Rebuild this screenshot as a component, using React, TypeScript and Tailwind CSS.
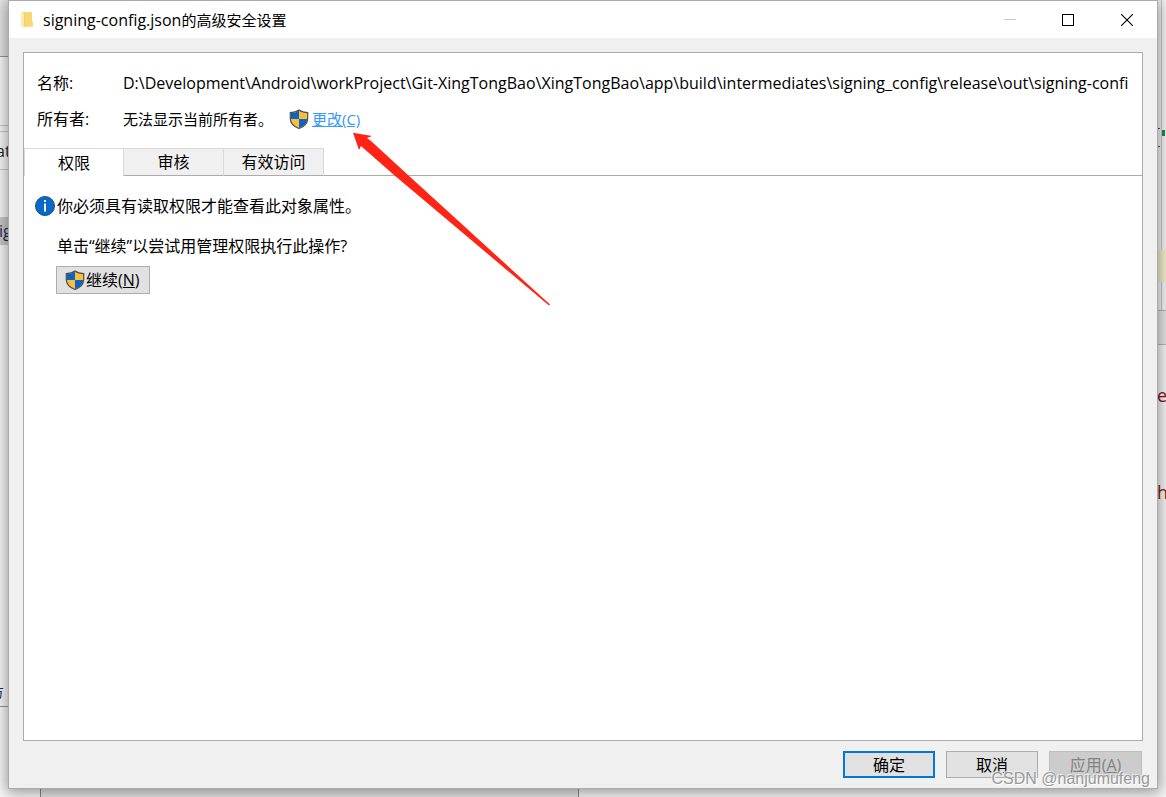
import type { ReactNode } from "react";

function Shield() {
  return (
    <svg viewBox="0 0 20 20" className="h-5 w-5 shrink-0" aria-hidden="true">
      <defs>
        <clipPath id="shield-clip">
          <path d="M10 1.5C7.700 3.200 4.800 4 1.800 4V9.500C1.800 14 5 17 10 19C15 17 18.200 14 18.200 9.500V4C15.200 4 12.300 3.200 10 1.500Z" />
        </clipPath>
      </defs>
      <g clipPath="url(#shield-clip)">
        <rect width="10" height="10" fill="#0865c4" />
        <rect x="10" width="10" height="10" fill="#ffbd38" />
        <rect y="10" width="10" height="10" fill="#ffbd38" />
        <rect x="10" y="10" width="10" height="10" fill="#0865c4" />
      </g>
      <path
        d="M10 1C7.700 2.800 4.800 3.600 1.300 3.600V9.500C1.300 14.200 4.800 17.500 10 19.500C15.200 17.500 18.700 14.200 18.700 9.500V3.600C15.200 3.600 12.300 2.800 10 1Z"
        fill="none"
        stroke="#4e4e4e"
        strokeWidth="1.2"
      />
    </svg>
  );
}

function FolderIcon() {
  return (
    <svg viewBox="0 0 14 18" className="h-[18px] w-3.5 shrink-0" aria-hidden="true">
      <path d="M2 1H11V11H12V16H3Z" fill="#f8d775" />
      <path d="M11 10H12V16H5V15H11Z" fill="#ffe08a" />
      <path d="M0 1H2L3.500 3V17.500L0 15Z" fill="#ffebac" />
      <path d="M2 1L3.500 3V15" fill="none" stroke="#e9c462" strokeWidth=".6" />
    </svg>
  );
}

function InfoIcon() {
  return (
    <svg viewBox="0 0 20 20" className="h-5 w-5 shrink-0" aria-hidden="true">
      <circle cx="10" cy="10" r="9.500" fill="#0869c6" stroke="#174f86" />
      <rect x="9" y="4" width="2" height="2" fill="#fff" />
      <rect x="9" y="7.500" width="2" height="8" fill="#fff" />
    </svg>
  );
}

function Backdrop() {
  return (
    <div className="absolute inset-0 overflow-hidden bg-[#fafafa]" aria-hidden="true">
      <div className="absolute inset-x-0 top-0 h-[57px] bg-[#e8e8e8]" />
      <div className="absolute top-0 left-[150px] h-px w-[260px] bg-[repeating-linear-gradient(90deg,#445_0_5px,#ddd_5px_12px,#667_12px_14px,#ddd_14px_21px)]" />
      <div className="absolute top-14 bottom-[90px] left-0 w-5 border-y border-[#999] bg-[#fafafa] text-[#222]">
        <div className="absolute top-[68px] h-[7px] w-full border-y border-[#ccc]" />
        <div className="absolute top-28 w-full border-b border-[#ccc]" />
        <div className="absolute top-[84px] -left-1 text-base leading-5">at</div>
        <div className="absolute top-[160px] h-7 w-full bg-[#ccc] text-base leading-7 text-[#1c2a58]">
          <span className="-ml-px">ig</span>
        </div>
        <div className="absolute bottom-1 -left-2.5 text-sm leading-5 text-[#1c2a58]">方</div>
      </div>
      <div className="absolute bottom-0 left-10 h-10 w-[539px] border-x border-[#888] bg-[#e8e8e8]" />
      <div className="absolute inset-y-0 right-0 w-3 bg-[#f8f8f8] text-[#8c1515]">
        <div className="absolute top-0 left-[7px] h-[310px] w-px bg-[#ccc]" />
        <div className="absolute top-[128px] left-[2px] h-[19px] w-1 overflow-hidden border-y border-[#456]" />
        <div className="absolute top-[130px] left-2 h-1.5 w-[3px] bg-[#0c9458]" />
        <div className="absolute top-[250px] h-8 w-full bg-[#f7f2cf]" />
        <div className="absolute top-[310px] h-[35px] w-full border-y border-[#bbb] bg-[#e8e8e8]" />
        <div className="absolute top-[385px] left-[3px] text-lg leading-5">e</div>
        <div className="absolute top-[482px] left-[3px] text-lg leading-5">h</div>
      </div>
    </div>
  );
}

function TitleBar() {
  return (
    <header className="flex h-[37px] shrink-0 items-center bg-white pl-3">
      <FolderIcon />
      <h1 className="ml-2 flex-1 text-[15px] leading-5"><span className="text-base leading-5">signing-config.json</span>的高级安全设置</h1>
      <button aria-label="最小化" disabled className="flex h-full w-[58px] items-center justify-center">
        <svg viewBox="0 0 12 12" className="h-3 w-3"><path d="M0 5.500H12" stroke="#c6c6c6" /></svg>
      </button>
      <button aria-label="最大化" className="flex h-full w-[58px] items-center justify-center">
        <svg viewBox="0 0 12 12" className="h-3 w-3"><rect x=".5" y=".5" width="11" height="11" fill="none" stroke="#000" /></svg>
      </button>
      <button aria-label="关闭" className="flex h-full w-[60px] items-center justify-center">
        <svg viewBox="0 0 12 12" className="h-3 w-3"><path d="M0 0L12 12M12 0L0 12" stroke="#000" strokeWidth="1.100" /></svg>
      </button>
    </header>
  );
}

function Tab({ children }: { children: ReactNode }) {
  return (
    <button role="tab" aria-selected="false" className="h-7 w-[100px] border-t border-r border-b border-t-[#d9d9d9] border-r-[#d9d9d9] border-b-[#acacac] bg-[#f0f0f0] text-base leading-6">
      {children}
    </button>
  );
}

function Arrow() {
  return (
    <svg viewBox="0 0 200 176" className="pointer-events-none absolute top-[79px] left-[329px] h-44 w-[200px]" aria-hidden="true">
      <path d="M0 .700L19 4L14 6L18 9L55 43L197 172.500L196 173.500L41 43L8 14L6 18Z" fill="#ff2415" />
    </svg>
  );
}

export default function App() {
  return (
    <div className="relative h-screen overflow-hidden font-['Open_Sans','Noto_Sans_CJK_SC',sans-serif] text-black">
      <Backdrop />
      <div className="relative flex h-full flex-col px-2 pb-2">
        <main className="flex min-h-0 flex-1 flex-col border border-[#aaa] bg-[#f0f0f0] shadow-[0_2px_14px_2px_rgba(0,0,0,0.4)]">
          <TitleBar />
          <section className="relative mx-3.5 mt-3.5 flex min-h-0 flex-1 flex-col border border-[#acacac] bg-white">
            <dl className="grid grid-cols-[86px_minmax(0,1fr)] gap-y-3 pt-[18px] pr-3.5 pb-[17px] pl-[13px] text-base leading-6">
              <dt>名称:</dt>
              <dd className="overflow-hidden whitespace-nowrap">
                D:\Development\Android\workProject\Git-XingTongBao\XingTongBao\app\build\intermediates\signing_config\release\out\signing-config.json
              </dd>
              <dt>所有者:</dt>
              <dd className="flex items-center">
                <span className="w-[166px] text-[15px]">无法显示当前所有者。</span>
                <Shield />
                <a href="#change" className="ml-[3px] text-[15px] text-[#3399ff] underline">更改(C)</a>
              </dd>
            </dl>
            <div role="tablist" className="flex h-7 shrink-0">
              <button role="tab" aria-selected="true" className="h-7 w-[100px] border-t border-r border-l border-[#d9d9d9] bg-white text-base leading-6">
                权限
              </button>
              <Tab>审核</Tab>
              <Tab>有效访问</Tab>
              <div className="flex-1 border-b border-[#acacac]" />
            </div>
            <div role="tabpanel" className="flex flex-col items-start pt-[18px] pl-[11px] text-base leading-6">
              <p className="flex items-center gap-0.5"><InfoIcon />你必须具有读取权限才能查看此对象属性。</p>
              <p className="mt-4 ml-[22px]">单击“继续”以尝试用管理权限执行此操作?</p>
              <button className="mt-2 ml-[21px] flex h-7 w-[94px] items-center border border-[#adadad] bg-[#e1e1e1] pl-2">
                <Shield />
                <span className="ml-px text-base">继续(<u>N</u>)</span>
              </button>
            </div>
            <Arrow />
          </section>
          <footer className="flex shrink-0 justify-end gap-[11px] px-[15px] py-2.5 text-base leading-6">
            <button className="h-[27px] w-[92px] border-2 border-[#0078d7] bg-[#e1e1e1] leading-5">确定</button>
            <button className="h-[27px] w-[92px] border border-[#adadad] bg-[#e1e1e1]">取消</button>
            <button disabled className="h-[27px] w-[93px] border border-[#bfbfbf] bg-[#ccc] text-[#838383]">应用(<u>A</u>)</button>
          </footer>
        </main>
      </div>
      <div className="absolute right-4 bottom-2 font-['Liberation_Sans',sans-serif] text-base leading-5 text-[#999] [text-shadow:1px_1px_1px_#fff,-1px_-1px_1px_#eee]">CSDN @nanjumufeng</div>
    </div>
  );
}
